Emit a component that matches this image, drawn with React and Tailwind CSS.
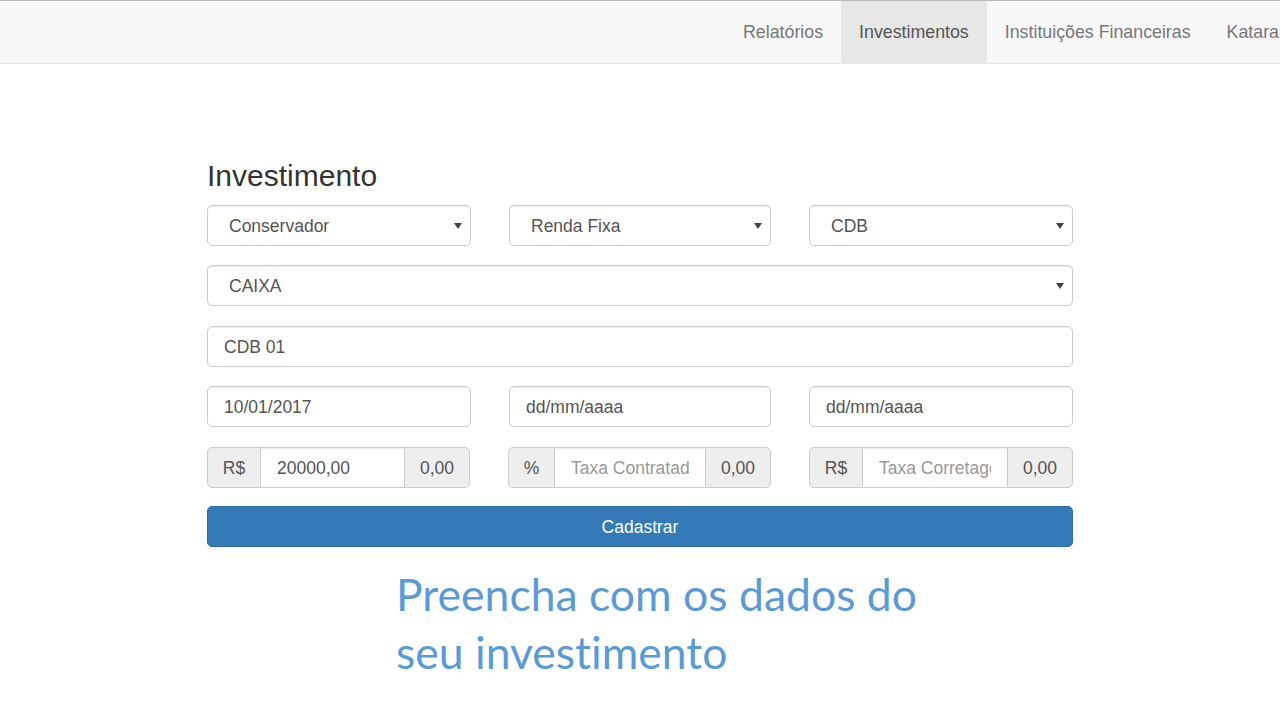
import {useState} from "react";

const Caret = () => (
    <svg width="8" height="6" viewBox="0 0 8 6" className="absolute right-[8px] top-1/2 -translate-y-1/2">
        <path d="M0 0 L8 0 L4 6 Z" fill="#444"/>
    </svg>
);

// campo tipo select do bootstrap (so visual)
const SelectBox = ({value, className = ""}) => (
    <div className={`relative h-[41px] flex items-center pt-[2px] pl-[21px] pr-6 bg-white border border-[#ccc] rounded-[5px] shadow-[inset_0_1px_1px_rgba(0,0,0,0.075)] text-[#555] ${className}`}>
        <span>{value}</span>
        <Caret/>
    </div>
);

const TextBox = ({value, placeholder, className = ""}) => (
    <input
        readOnly
        value={value}
        placeholder={placeholder}
        className={`h-[41px] w-full px-[16px] pt-[2px] bg-white border border-[#ccc] rounded-[5px] shadow-[inset_0_1px_1px_rgba(0,0,0,0.075)] text-[#555] placeholder:text-[#555] outline-none ${className}`}
    />
);

const InputGroup = ({prefix, prefixW, value, placeholder, suffixW}) => (
    <div className="flex h-[41px] w-full">
        <div
            className="flex items-center justify-center pt-[2px] bg-[#eee] border border-[#ccc] rounded-l-[5px] text-[#555] shrink-0"
            style={{width: prefixW}}
        >
            {prefix}
        </div>
        <input
            readOnly
            value={value}
            placeholder={placeholder}
            className="flex-1 min-w-0 px-[16px] pt-[2px] bg-white border-y border-[#ccc] text-[#555] placeholder:text-[#999] outline-none shadow-[inset_0_1px_1px_rgba(0,0,0,0.075)]"
        />
        <div
            className="flex items-center justify-center pt-[2px] bg-[#eee] border border-[#ccc] rounded-r-[5px] text-[#555] shrink-0"
            style={{width: suffixW}}
        >
            0,00
        </div>
    </div>
);

const App = () => {
    const [active] = useState("Investimentos");
    const menus = ["Relatórios", "Investimentos", "Instituições Financeiras", "Katara"];

    return (
        <div className="min-h-[720px] bg-white font-['Liberation_Sans',Arial,sans-serif] text-[17.5px]">
            {/* navbar */}
            <div className="h-[64px] bg-[#f8f8f8] border-t border-b border-t-[#bbb] border-b-[#e7e7e7] overflow-hidden">
                <ul className="flex h-full pl-[725px] whitespace-nowrap text-[17.8px]">
                    {menus.map((m) => (
                        <li
                            key={m}
                            className={`flex items-center px-[18px] shrink-0 ${
                                active === m ? "bg-[#e7e7e7] text-[#555]" : "text-[#777]"
                            }`}
                        >
                            {m}
                        </li>
                    ))}
                </ul>
            </div>

            <div className="w-[866px] mx-auto pt-[95px]">
                <h2 className="text-[30px] leading-[34px] text-[#333] mb-[12px]">Investimento</h2>

                <div className="grid grid-cols-[264px_262px_264px] justify-between">
                    <SelectBox value="Conservador"/>
                    <SelectBox value="Renda Fixa" className="pl-[20px]"/>
                    <SelectBox value="CDB"/>
                </div>

                <SelectBox value="CAIXA" className="mt-[19px]"/>

                <div className="mt-[20px]">
                    <TextBox value="CDB 01"/>
                </div>

                <div className="grid grid-cols-[264px_262px_264px] justify-between mt-[19px]">
                    <TextBox value="10/01/2017"/>
                    <TextBox placeholder="dd/mm/aaaa"/>
                    <TextBox placeholder="dd/mm/aaaa"/>
                </div>

                <div className="grid grid-cols-[263px_263px_264px] justify-between mt-[20px]">
                    <InputGroup prefix="R$" prefixW={54} value="20000,00" suffixW={66}/>
                    <InputGroup prefix="%" prefixW={47} placeholder="Taxa Contratada" suffixW={66}/>
                    <InputGroup prefix="R$" prefixW={54} placeholder="Taxa Corretagem" suffixW={66}/>
                </div>

                <button className="mt-[18px] w-full h-[41px] pt-[2px] bg-[#337ab7] border border-[#2e6da4] rounded-[5px] text-white">
                    Cadastrar
                </button>

                <p className="ml-[189px] mt-[18px] font-['Lato',sans-serif] text-[44.5px] leading-[58px] text-[#5b9bd5] [font-variant-ligatures:none]">
                    Preencha com os dados do
                    <br/>
                    seu investimento
                </p>
            </div>
        </div>
    );
};

export default App;
